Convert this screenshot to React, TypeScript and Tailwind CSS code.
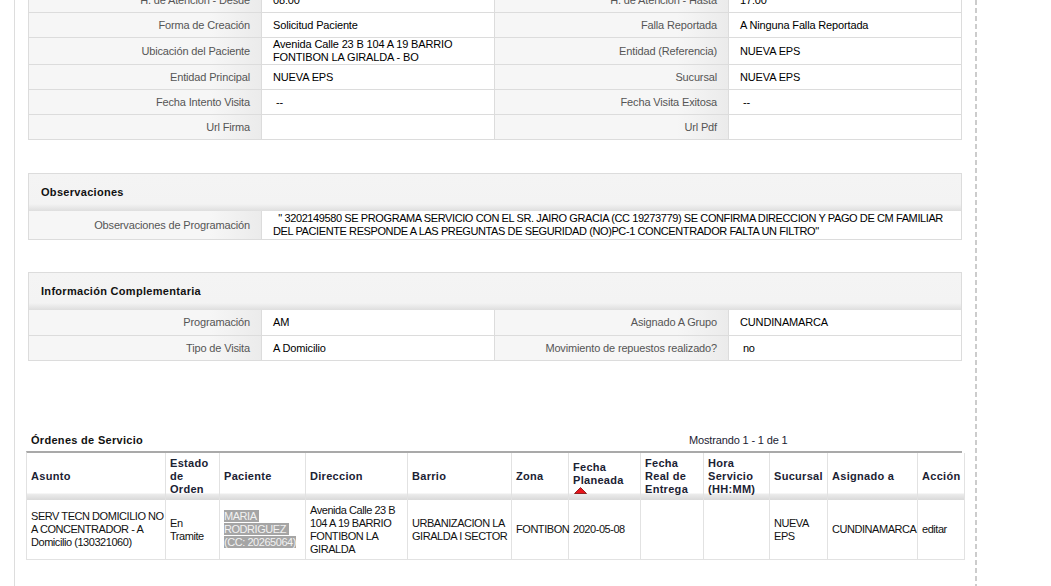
import React from "react";

const label =
  "flex items-center justify-end border-r border-b border-[#dcdcdc] bg-[linear-gradient(to_right,#f6f6f6_78%,#ebebeb)] pr-[11px] text-right text-[#555]";
const value = "flex items-center border-r border-b border-[#dcdcdc] bg-white pl-[11px] pr-2 text-black";

const detalle: [string, string, string, string, string][] = [
  ["H. de Atención - Desde", "08:00", "H. de Atención - Hasta", "17:00", "h-[25px]"],
  ["Forma de Creación", "Solicitud Paciente", "Falla Reportada", "A Ninguna Falla Reportada", "h-[25px]"],
  ["Ubicación del Paciente", "Avenida Calle 23 B 104 A 19 BARRIO FONTIBON LA GIRALDA - BO", "Entidad (Referencia)", "NUEVA EPS", "h-[27px]"],
  ["Entidad Principal", "NUEVA EPS", "Sucursal", "NUEVA EPS", "h-[25px]"],
  ["Fecha Intento Visita", "\u00a0--", "Fecha Visita Exitosa", "\u00a0--", "h-[25px]"],
  ["Url Firma", "", "Url Pdf", "", "h-[25px]"],
];

const complementaria: [string, string, string, string, string][] = [
  ["Programación", "AM", "Asignado A Grupo", "CUNDINAMARCA", "h-[26px]"],
  ["Tipo de Visita", "A Domicilio", "Movimiento de repuestos realizado?", "\u00a0no", "h-[25px]"],
];

function Rows({ rows }: { rows: [string, string, string, string, string][] }) {
  return (
    <div className="grid grid-cols-[233px_233px_234px_1fr]">
      {rows.map(([l1, v1, l2, v2, h]) => (
        <React.Fragment key={l1}>
          <div className={`${label} ${h}`}>{l1}</div>
          <div className={`${value} ${h}`}>{v1}</div>
          <div className={`${label} ${h}`}>{l2}</div>
          <div className={`${value} ${h}`}>{v2}</div>
        </React.Fragment>
      ))}
    </div>
  );
}

function SectionHeader({ title }: { title: string }) {
  return (
    <div className="flex h-[37px] items-center bg-[linear-gradient(to_bottom,#f4f4f4_0,#f3f3f3_calc(100%_-_7px),#dedede_100%)] pl-[12px] font-bold tracking-[0.3px] text-[#111]">
      {title}
    </div>
  );
}

const cols = [
  "Asunto",
  "Estado de Orden",
  "Paciente",
  "Direccion",
  "Barrio",
  "Zona",
  "Fecha Planeada",
  "Fecha Real de Entrega",
  "Hora Servicio (HH:MM)",
  "Sucursal",
  "Asignado a",
  "Acción",
];

const th =
  "flex h-[47px] items-center border-r border-[#e2e2e2] bg-[linear-gradient(to_bottom,#fff_0,#fff_calc(100%_-_7px),#ececec_calc(100%_-_6px),#d9d9d9_100%)] px-[4px] font-bold leading-[13px] tracking-[0.3px] text-[#1b2233]";
const td =
  "flex h-[60px] items-center border-r border-b border-[#e2e2e2] pl-[4px] pr-[2px] leading-[13px] tracking-[-0.45px] text-[#111]";

export default function App() {
  return (
    <div className="flex h-[586px] w-[1051px] overflow-hidden bg-white font-['Liberation_Sans',Arial,Helvetica,sans-serif] text-[11px] leading-[13px] tracking-[-0.15px]">
      <div className="w-[14px] shrink-0" />
      <div className="w-[961px] shrink-0 border-l border-[#dddddd] px-[13px]">
        <div className="mt-[-13px] border-t border-l border-[#dcdcdc]">
          <Rows rows={detalle} />
        </div>

        <div className="mt-[33px] border-t border-l border-r border-[#dcdcdc]">
          <SectionHeader title="Observaciones" />
          <div className="grid grid-cols-[233px_1fr]">
            <div className={`${label} h-[29px]`}>Observaciones de Programación</div>
            <div className="flex h-[29px] items-center border-b border-[#dcdcdc] bg-white pl-[11px] text-black">
              <div className="whitespace-nowrap tracking-[-0.4px]">
                {"\u00a0\u00a0\" 3202149580 SE PROGRAMA SERVICIO CON EL SR. JAIRO GRACIA (CC 19273779) SE CONFIRMA DIRECCION Y PAGO DE CM FAMILIAR"}
                <br />
                {"DEL PACIENTE RESPONDE A LAS PREGUNTAS DE SEGURIDAD (NO)PC-1 CONCENTRADOR FALTA UN FILTRO\""}
              </div>
            </div>
          </div>
        </div>

        <div className="mt-[32px] border-t border-l border-[#dcdcdc]">
          <div className="border-r border-[#dcdcdc]">
            <SectionHeader title="Información Complementaria" />
          </div>
          <Rows rows={complementaria} />
        </div>

        <div className="ml-[-2px] mt-[73px]">
          <div className="flex h-[13px] items-center">
            <div className="flex-1 pl-[5px] font-bold tracking-[0.3px] text-[#111]">Órdenes de Servicio</div>
            <div className="w-[273px] text-[#1b2233]">Mostrando 1 - 1 de 1</div>
          </div>
          <div className="mt-[4px] grid grid-cols-[139px_54px_86px_102px_104px_57px_72px_63px_66px_58px_90px_1fr] border-t-2 border-l border-t-[#a9a9a9] border-l-[#e2e2e2]">
            {cols.map((c) =>
              c === "Fecha Planeada" ? (
                <div key={c} className={th}>
                  <div className="pt-[1px]">
                    Fecha Planeada
                    <svg width="13" height="7" viewBox="0 0 13 7" className="ml-[1px] block">
                      <polygon points="6.5,0.5 12.5,6.5 0.5,6.5" fill="#e8141b" stroke="#7a0a0a" strokeWidth="0.8" />
                    </svg>
                  </div>
                </div>
              ) : (
                <div key={c} className={th}>
                  {c}
                </div>
              )
            )}
            <div className={`${td} whitespace-nowrap`}>
              <div>
                SERV TECN DOMICILIO NO
                <br />A CONCENTRADOR - A
                <br />
                Domicilio (130321060)
              </div>
            </div>
            <div className={td}>En Tramite</div>
            <div className={td}>
              <div>
                <span className="bg-[#a5a5a5] text-[#f2f2f2]">MARIA&nbsp; RODRIGUEZ&nbsp; (CC: 20265064)</span>
              </div>
            </div>
            <div className={td}>Avenida Calle 23 B 104 A 19 BARRIO FONTIBON LA GIRALDA</div>
            <div className={td}>URBANIZACION LA GIRALDA I SECTOR</div>
            <div className={`${td} whitespace-nowrap tracking-[-0.6px]`}>FONTIBON</div>
            <div className={td}>2020-05-08</div>
            <div className={td} />
            <div className={td} />
            <div className={td}>NUEVA EPS</div>
            <div className={td}>CUNDINAMARCA</div>
            <div className={td}>editar</div>
          </div>
        </div>
      </div>
      <div className="h-full w-[2px] shrink-0 bg-[repeating-linear-gradient(to_bottom,#cccccc_0,#cccccc_5px,transparent_5px,transparent_8px)]" />
    </div>
  );
}
